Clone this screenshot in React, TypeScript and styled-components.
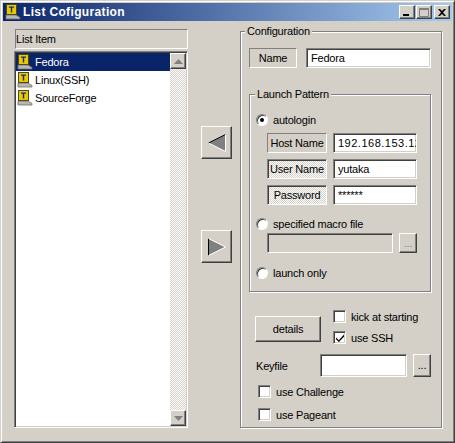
import styled, { createGlobalStyle } from "styled-components";

const GlobalStyle = createGlobalStyle`
  html, body {
    margin: 0;
    padding: 0;
    background: #d4d0c8;
  }
`;

const raised = `
  border: 1px solid;
  border-color: #fff #404040 #404040 #fff;
  box-shadow: inset -1px -1px 0 #808080;
  background: #d4d0c8;
`;

const sunken = `
  border: 1px solid;
  border-color: #808080 #fff #fff #808080;
  box-shadow: inset 1px 1px 0 #404040, inset -1px -1px 0 #d4d0c8;
`;

const dither = `
  background-color: #d4d0c8;
  background-image: conic-gradient(#fff 25%, #d4d0c8 0 50%, #fff 0 75%, #d4d0c8 0);
  background-size: 2px 2px;
`;

const Window = styled.div`
  width: 455px;
  height: 443px;
  box-sizing: border-box;
  padding: 2px;
  background: #d4d0c8;
  border: 1px solid;
  border-color: #d4d0c8 #404040 #404040 #d4d0c8;
  box-shadow: inset 1px 1px 0 #fff, inset -1px -1px 0 #808080;
  display: flex;
  flex-direction: column;
  font-family: "Liberation Sans", Arial, sans-serif;
  font-size: 11px;
  letter-spacing: -0.2px;
  color: #000;
  overflow: hidden;
`;

const TitleBar = styled.div`
  height: 18px;
  flex: none;
  display: flex;
  align-items: center;
  padding: 0 2px;
  gap: 2px;
  background: linear-gradient(90deg, #0a246a, #a6caf0);
  color: #fff;
  font-size: 12px;
  font-weight: 700;
  letter-spacing: 0.35px;
`;

const TitleText = styled.span`
  flex: 1;
`;

const TitleButtons = styled.div`
  display: flex;
  gap: 1px;
`;

const TitleButton = styled.div<{ $gap?: number }>`
  ${raised}
  box-sizing: border-box;
  width: 16px;
  height: 14px;
  margin-left: ${(p) => p.$gap ?? 0}px;
  display: flex;
  align-items: center;
  justify-content: center;

  svg {
    display: block;
  }
`;

const Body = styled.div`
  flex: 1;
  min-height: 0;
  display: flex;
  padding: 3px 10px 12px 11px;
`;

const LeftColumn = styled.div`
  width: 174px;
  flex: none;
  margin-top: 5px;
  display: flex;
  flex-direction: column;
  gap: 2px;
`;

const ListHeader = styled.div`
  height: 20px;
  flex: none;
  box-sizing: border-box;
  margin-left: 1px;
  border: 1px solid;
  border-color: #808080 #fff #fff #808080;
  display: flex;
  align-items: center;
`;

const ListBox = styled.div`
  ${sunken}
  flex: 1;
  min-height: 0;
  box-sizing: border-box;
  padding: 1px;
  display: flex;
  background: #fff;
  overflow: hidden;
`;

const Items = styled.ul`
  flex: 1;
  list-style: none;
  margin: 0;
  padding: 0;
`;

const Item = styled.li<{ $selected?: boolean }>`
  height: 18px;
  display: flex;
  align-items: center;
  gap: 2px;
  padding-left: 1px;
  background: ${(p) => (p.$selected ? "#0a246a" : "transparent")};
  color: ${(p) => (p.$selected ? "#fff" : "#000")};
`;

const ScrollBar = styled.div`
  width: 16px;
  flex: none;
  display: flex;
  flex-direction: column;
  justify-content: space-between;
  ${dither}
`;

const ScrollButton = styled.div`
  ${raised}
  box-sizing: border-box;
  height: 16px;
  display: flex;
  align-items: center;
  justify-content: center;
`;

const MoveColumn = styled.div`
  width: 52px;
  flex: none;
  box-sizing: border-box;
  display: flex;
  flex-direction: column;
  align-items: flex-start;
  padding: 102px 0 0 13px;
  gap: 71px;
`;

const MoveButton = styled.div`
  ${raised}
  box-sizing: border-box;
  width: 31px;
  height: 33px;
  display: flex;
  align-items: center;
  justify-content: center;
`;

const Group = styled.fieldset`
  box-sizing: border-box;
  margin: 0;
  min-width: 0;
  border: 1px solid #808080;
  box-shadow: 1px 1px 0 #fff, inset 1px 1px 0 #fff;
`;

const ConfigGroup = styled(Group)`
  width: 202px;
  flex: none;
  padding: 0 10px 0 8px;
  display: flex;
  flex-direction: column;
`;

const PatternGroup = styled(Group)`
  height: 205px;
  flex: none;
  padding: 0 0 0 6px;
  margin-top: 19px;
`;

const Legend = styled.legend<{ $shift: number }>`
  padding: 0 2px;
  margin-left: ${(p) => p.$shift}px;
  line-height: 14px;
  background: #d4d0c8;
  position: relative;
`;

const NameRow = styled.div`
  display: flex;
  gap: 9px;
  margin-top: 10px;
`;

const FieldRows = styled.div`
  display: flex;
  flex-direction: column;
  gap: 6px;
  margin: 7px 0 0 11px;
`;

const FieldRow = styled.div`
  display: flex;
  gap: 6px;
`;

const FieldLabel = styled.div<{ $width: number; $focus?: boolean }>`
  width: ${(p) => p.$width}px;
  height: 20px;
  box-sizing: border-box;
  display: flex;
  align-items: center;
  justify-content: center;
  white-space: nowrap;
  border: 1px solid;
  border-color: #808080 #fff #fff #808080;
  ${(p) => (p.$focus ? dither : "")}
  ${(p) => (p.$focus ? "box-shadow: inset 1px 1px 0 #404040;" : "")}
`;

const TextBox = styled.div<{
  $width: number;
  $height?: number;
  $disabled?: boolean;
  $wide?: boolean;
}>`
  ${sunken}
  width: ${(p) => p.$width}px;
  height: ${(p) => p.$height ?? 20}px;
  box-sizing: border-box;
  padding: 0 0 0 4px;
  display: flex;
  align-items: center;
  overflow: hidden;
  white-space: nowrap;
  letter-spacing: ${(p) => (p.$wide ? "0.5px" : "inherit")};
  background: ${(p) => (p.$disabled ? "#d4d0c8" : "#fff")};
`;

const Choice = styled.label<{ $top?: number }>`
  display: flex;
  align-items: center;
  gap: 5px;
  line-height: 12px;
  margin-top: ${(p) => p.$top ?? 0}px;
  white-space: nowrap;
`;

const Radio = styled.span<{ $checked?: boolean }>`
  width: 12px;
  height: 12px;
  box-sizing: border-box;
  flex: none;
  border-radius: 50%;
  border: 1px solid;
  border-color: #808080 #fff #fff #808080;
  background: #fff;
  box-shadow: inset 1px 1px 0 #404040;
  display: flex;
  align-items: center;
  justify-content: center;

  &::after {
    content: "";
    width: 4px;
    height: 4px;
    border-radius: 50%;
    background: ${(p) => (p.$checked ? "#000" : "transparent")};
  }
`;

const CheckBox = styled.span`
  ${sunken}
  width: 13px;
  height: 13px;
  box-sizing: border-box;
  flex: none;
  background: #fff;
  display: flex;
  align-items: center;
  justify-content: center;
`;

const MacroRow = styled.div`
  display: flex;
  gap: 6px;
  margin: 3px 0 0 11px;
`;

const DotsButton = styled.div<{ $disabled?: boolean; $height: number }>`
  ${raised}
  width: 18px;
  height: ${(p) => p.$height}px;
  box-sizing: border-box;
  display: flex;
  align-items: center;
  justify-content: center;
  line-height: 1;
  color: ${(p) => (p.$disabled ? "#808080" : "#000")};
`;

const OptionsRow = styled.div`
  display: flex;
  align-items: flex-start;
  margin: 18px 0 0 6px;
  gap: 12px;
`;

const DetailsButton = styled.div`
  ${raised}
  width: 66px;
  height: 26px;
  margin-top: 6px;
  box-sizing: border-box;
  display: flex;
  align-items: center;
  justify-content: center;
`;

const OptionStack = styled.div`
  display: flex;
  flex-direction: column;
  gap: 8px;
`;

const KeyRow = styled.div`
  display: flex;
  align-items: center;
  margin: 10px 0 0 7px;
`;

const KeyLabel = styled.span`
  width: 64px;
`;

const Keyfile = styled(TextBox)`
  margin-right: 6px;
`;

const BottomChoices = styled.div`
  display: flex;
  flex-direction: column;
  gap: 10px;
  margin: 8px 0 0 9px;
`;

function TermIcon() {
  return (
    <svg width="16" height="16" viewBox="0 0 16 16" style={{ flex: "none" }}>
      <path d="M1 11h10l4 2.5V15H1z" fill="#b8b8b0" stroke="#6c6c68" strokeWidth="0.8" />
      <rect x="1.5" y="0.5" width="10" height="10" fill="#e8c800" stroke="#4c4820" />
      <path d="M4 2.5h5v1.3H7.2V8.5H5.8V3.8H4z" fill="#1c2a80" />
    </svg>
  );
}

function Triangle({ points, fill }: { points: string; fill: string }) {
  return (
    <svg width="9" height="5" viewBox="0 0 9 5">
      <polygon points={points} fill={fill} />
    </svg>
  );
}

function MoveLeft() {
  return (
    <svg width="18" height="18" viewBox="0 0 18 18">
      <polygon points="0.5,9 17.5,0.5 17.5,17.5" fill="#808080" />
      <path d="M0.5 9 17.5 0.5" stroke="#000" fill="none" />
      <path d="M0.5 9 17.5 17.5V0.5" stroke="#fff" fill="none" />
    </svg>
  );
}

function MoveRight() {
  return (
    <svg width="18" height="18" viewBox="0 0 18 18">
      <polygon points="0.5,0.5 17.5,9 0.5,17.5" fill="#808080" />
      <path d="M0.5 17.5V0.5" stroke="#000" fill="none" />
      <path d="M0.5 0.5 17.5 9 0.5 17.5" stroke="#fff" fill="none" />
    </svg>
  );
}

function App() {
  return (
    <>
      <GlobalStyle />
      <Window>
        <TitleBar>
          <TermIcon />
          <TitleText>List Cofiguration</TitleText>
          <TitleButtons>
            <TitleButton>
              <svg width="8" height="8" viewBox="0 0 8 8">
                <rect x="0" y="6" width="6" height="2" fill="#000" />
              </svg>
            </TitleButton>
            <TitleButton>
              <svg width="10" height="9" viewBox="0 0 10 9">
                <path d="M.5 1.5h9v7h-9z" fill="none" stroke="#808080" />
                <path d="M0 .5h10" stroke="#808080" />
              </svg>
            </TitleButton>
            <TitleButton $gap={1}>
              <svg width="8" height="7" viewBox="0 0 8 7">
                <path d="M0 0h2l2 2 2-2h2L5 3.5 8 7H6L4 5 2 7H0l3-3.5z" fill="#000" />
              </svg>
            </TitleButton>
          </TitleButtons>
        </TitleBar>
        <Body>
          <LeftColumn>
            <ListHeader>List Item</ListHeader>
            <ListBox>
              <Items>
                <Item $selected>
                  <TermIcon />
                  Fedora
                </Item>
                <Item>
                  <TermIcon />
                  Linux(SSH)
                </Item>
                <Item>
                  <TermIcon />
                  SourceForge
                </Item>
              </Items>
              <ScrollBar>
                <ScrollButton>
                  <Triangle points="0,5 4.5,0 9,5" fill="#808080" />
                </ScrollButton>
                <ScrollButton>
                  <Triangle points="0,0 9,0 4.5,5" fill="#808080" />
                </ScrollButton>
              </ScrollBar>
            </ListBox>
          </LeftColumn>
          <MoveColumn>
            <MoveButton>
              <MoveLeft />
            </MoveButton>
            <MoveButton>
              <MoveRight />
            </MoveButton>
          </MoveColumn>
          <ConfigGroup>
            <Legend $shift={-4}>Configuration</Legend>
            <NameRow>
              <FieldLabel $width={48}>Name</FieldLabel>
              <TextBox $width={125}>Fedora</TextBox>
            </NameRow>
            <PatternGroup>
              <Legend $shift={-1}>Launch Pattern</Legend>
              <Choice $top={13}>
                <Radio $checked />
                autologin
              </Choice>
              <FieldRows>
                <FieldRow>
                  <FieldLabel $width={60}>Host Name</FieldLabel>
                  <TextBox $width={84} $wide>192.168.153.128</TextBox>
                </FieldRow>
                <FieldRow>
                  <FieldLabel $width={60} $focus>User Name</FieldLabel>
                  <TextBox $width={84}>yutaka</TextBox>
                </FieldRow>
                <FieldRow>
                  <FieldLabel $width={60} $focus>Password</FieldLabel>
                  <TextBox $width={84}>******</TextBox>
                </FieldRow>
              </FieldRows>
              <Choice $top={13}>
                <Radio />
                specified macro file
              </Choice>
              <MacroRow>
                <TextBox $width={126} $disabled />
                <DotsButton $disabled $height={20}>...</DotsButton>
              </MacroRow>
              <Choice $top={14}>
                <Radio />
                launch only
              </Choice>
            </PatternGroup>
            <OptionsRow>
              <DetailsButton>details</DetailsButton>
              <OptionStack>
                <Choice>
                  <CheckBox />
                  kick at starting
                </Choice>
                <Choice>
                  <CheckBox>
                    <svg width="8" height="8" viewBox="0 0 7 7">
                      <path d="M0 3 2.5 5.5 7 0.5v2L2.5 7 0 4.5z" fill="#000" />
                    </svg>
                  </CheckBox>
                  use SSH
                </Choice>
              </OptionStack>
            </OptionsRow>
            <KeyRow>
              <KeyLabel>Keyfile</KeyLabel>
              <Keyfile $width={87} $height={23} />
              <DotsButton $height={23}>...</DotsButton>
            </KeyRow>
            <BottomChoices>
              <Choice>
                <CheckBox />
                use Challenge
              </Choice>
              <Choice>
                <CheckBox />
                use Pageant
              </Choice>
            </BottomChoices>
          </ConfigGroup>
        </Body>
      </Window>
    </>
  );
}

export default App;
